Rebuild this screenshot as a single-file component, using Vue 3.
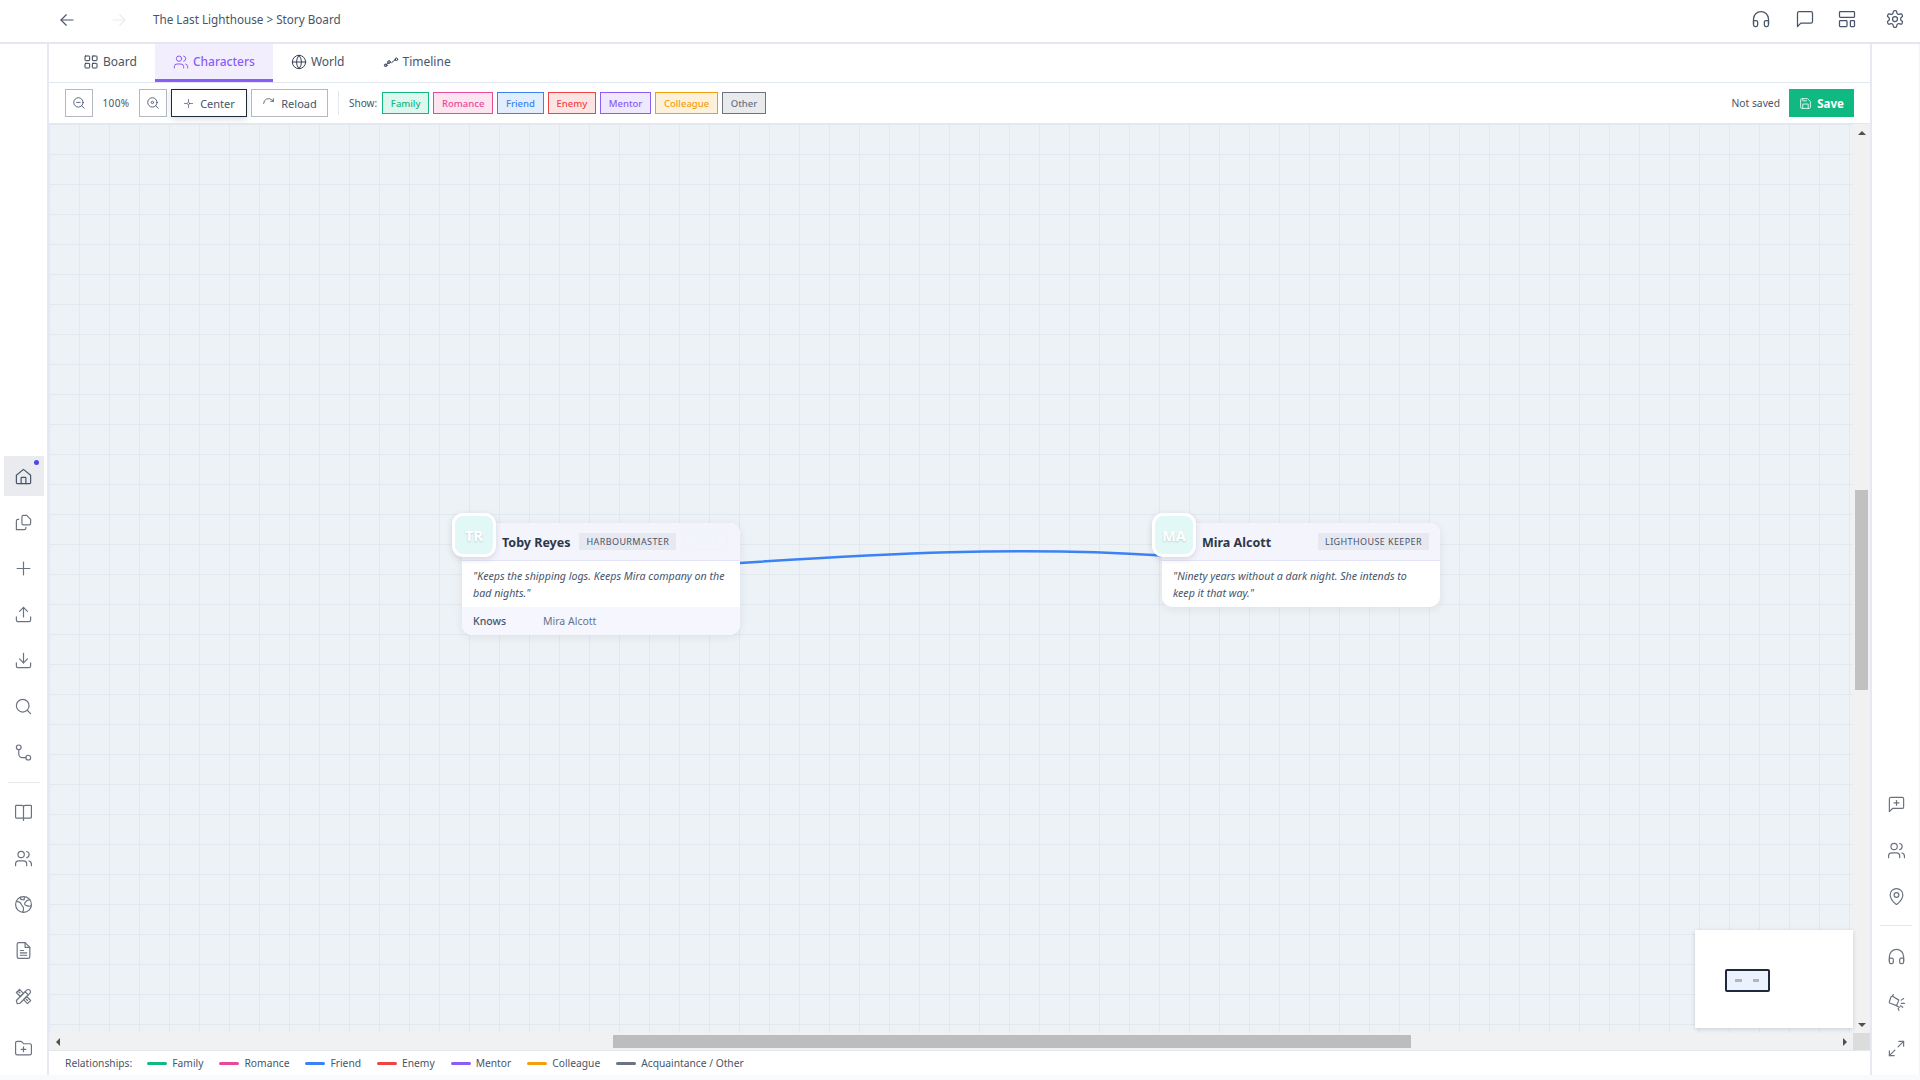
<script setup>
import { onMounted, ref } from 'vue'

const icons = {
  back: ['M20 12H4', 'M11 5l-7 7 7 7'],
  forward: ['M4 12h16', 'M13 5l7 7-7 7'],
  headphones: ['M3 18v-6a9 9 0 0 1 18 0v6', 'M21 19a2 2 0 0 1-2 2h-1a2 2 0 0 1-2-2v-3a2 2 0 0 1 2-2h3z', 'M3 19a2 2 0 0 0 2 2h1a2 2 0 0 0 2-2v-3a2 2 0 0 0-2-2H3z'],
  message: ['M21 15a2 2 0 0 1-2 2H7l-4 4V5a2 2 0 0 1 2-2h14a2 2 0 0 1 2 2z'],
  layout: ['M4 3h16a1 1 0 0 1 1 1v5a1 1 0 0 1-1 1H4a1 1 0 0 1-1-1V4a1 1 0 0 1 1-1z', 'M4 14h7a1 1 0 0 1 1 1v5a1 1 0 0 1-1 1H4a1 1 0 0 1-1-1v-5a1 1 0 0 1 1-1z', 'M17 14h3a1 1 0 0 1 1 1v5a1 1 0 0 1-1 1h-3a1 1 0 0 1-1-1v-5a1 1 0 0 1 1-1z'],
  gear: ['M12.2 2h-.4a2 2 0 0 0-2 2v.2a2 2 0 0 1-1 1.7l-.4.3a2 2 0 0 1-2 0l-.2-.1a2 2 0 0 0-2.7.7l-.2.4a2 2 0 0 0 .7 2.7l.2.1a2 2 0 0 1 1 1.7v.5a2 2 0 0 1-1 1.8l-.2.1a2 2 0 0 0-.7 2.7l.2.4a2 2 0 0 0 2.7.7l.2-.1a2 2 0 0 1 2 0l.4.3a2 2 0 0 1 1 1.7v.2a2 2 0 0 0 2 2h.4a2 2 0 0 0 2-2v-.2a2 2 0 0 1 1-1.7l.4-.3a2 2 0 0 1 2 0l.2.1a2 2 0 0 0 2.7-.7l.2-.4a2 2 0 0 0-.7-2.7l-.2-.1a2 2 0 0 1-1-1.8v-.5a2 2 0 0 1 1-1.7l.2-.1a2 2 0 0 0 .7-2.7l-.2-.4a2 2 0 0 0-2.7-.7l-.2.1a2 2 0 0 1-2 0l-.4-.3a2 2 0 0 1-1-1.7V4a2 2 0 0 0-2-2z', 'M15 12a3 3 0 1 1-6 0 3 3 0 0 1 6 0z'],
  home: ['M3 10.5 12 3l9 7.5V20a1 1 0 0 1-1 1H4a1 1 0 0 1-1-1z', 'M9 21v-7a1 1 0 0 1 1-1h4a1 1 0 0 1 1 1v7'],
  copy: ['M10 13V5a2 2 0 0 1 2-2h4l5 5v5a2 2 0 0 1-2 2h-7a2 2 0 0 1-2-2z', 'M6 8H5a2 2 0 0 0-2 2v11h10a2 2 0 0 0 2-2v-1'],
  plus: ['M12 4v16', 'M4 12h16'],
  upload: ['M12 15V3', 'M7 8l5-5 5 5', 'M3 15v4a2 2 0 0 0 2 2h14a2 2 0 0 0 2-2v-4'],
  download: ['M12 3v12', 'M7 10l5 5 5-5', 'M3 15v4a2 2 0 0 0 2 2h14a2 2 0 0 0 2-2v-4'],
  search: ['M19 11a8 8 0 1 1-16 0 8 8 0 0 1 16 0z', 'M21 21l-4.3-4.3'],
  route: ['M9 5.5a3 3 0 1 1-6 0 3 3 0 0 1 6 0z', 'M21 18.5a3 3 0 1 1-6 0 3 3 0 0 1 6 0z', 'M6 8.5V14a4.500 4.500 0 0 0 4.500 4.500H15'],
  book: ['M12 5a2 2 0 0 0-2-2H3a1 1 0 0 0-1 1v14a1 1 0 0 0 1 1h18a1 1 0 0 0 1-1V4a1 1 0 0 0-1-1h-7a2 2 0 0 0-2 2z', 'M12 5v17'],
  users: ['M16 21v-2a4 4 0 0 0-4-4H6a4 4 0 0 0-4 4v2', 'M13 7a4 4 0 1 1-8 0 4 4 0 0 1 8 0z', 'M22 21v-2a4 4 0 0 0-3-3.900', 'M16 3.100a4 4 0 0 1 0 7.800'],
  planet: ['M22 12a10 10 0 1 1-20 0 10 10 0 0 1 20 0z', 'M3 8.500c3-.5 5 .5 6 3s3 3 3 5 0 4-1 5', 'M20 5.500c-3 1-5 2-6 4s-1 3 2 4 5 1 6 0', 'M8 3c0 2 1 3 3 3s2 1 2-3'],
  file: ['M14 2H6a2 2 0 0 0-2 2v16a2 2 0 0 0 2 2h12a2 2 0 0 0 2-2V8z', 'M14 2v6h6', 'M8 12h4', 'M8 15h8', 'M8 18h8'],
  tools: ['M4 21l-1-4L16 4a2.800 2.800 0 0 1 4 4L7.500 20.500z', 'M14 6l4 4', 'M3 7l4-4 5 5-4 4z', 'M12 16l4-4 5 5-4 4z', 'M6 6l1.500 1.500', 'M15.500 15.500L17 17'],
  folderPlus: ['M20 20a2 2 0 0 0 2-2V8a2 2 0 0 0-2-2h-8l-2-2.500a2 2 0 0 0-1.700-.5H4a2 2 0 0 0-2 2v13a2 2 0 0 0 2 2z', 'M12 10v6', 'M9 13h6'],
  msgPlus: ['M21 15a2 2 0 0 1-2 2H7l-4 4V5a2 2 0 0 1 2-2h14a2 2 0 0 1 2 2z', 'M12 7v6', 'M9 10h6'],
  pin: ['M20 10c0 5-5.500 10.200-7.400 11.800a1 1 0 0 1-1.200 0C9.500 20.200 4 15 4 10a8 8 0 0 1 16 0z', 'M15 10a3 3 0 1 1-6 0 3 3 0 0 1 6 0z'],
  spot: ['M7 4l8 5-3 7-8-3a1.500 1.500 0 0 1-1-2l2-6a1.500 1.500 0 0 1 2-1z', 'M7 4l1-2', 'M18 13h4', 'M17 16l3 2', 'M18 9l3-2', 'M14 19l1 3', 'M12 16l4 2'],
  expand: ['M15 3h6v6', 'M21 3l-7 7', 'M9 21H3v-6', 'M3 21l7-7'],
  grid: ['M4 3h5a1 1 0 0 1 1 1v5a1 1 0 0 1-1 1H4a1 1 0 0 1-1-1V4a1 1 0 0 1 1-1z', 'M15 3h5a1 1 0 0 1 1 1v5a1 1 0 0 1-1 1h-5a1 1 0 0 1-1-1V4a1 1 0 0 1 1-1z', 'M4 14h5a1 1 0 0 1 1 1v5a1 1 0 0 1-1 1H4a1 1 0 0 1-1-1v-5a1 1 0 0 1 1-1z', 'M15 14h5a1 1 0 0 1 1 1v5a1 1 0 0 1-1 1h-5a1 1 0 0 1-1-1v-5a1 1 0 0 1 1-1z'],
  globe: ['M22 12a10 10 0 1 1-20 0 10 10 0 0 1 20 0z', 'M2 12h20', 'M12 2a15 15 0 0 1 0 20 15 15 0 0 1 0-20z'],
  timeline: ['M3 17l6-4', 'M13 13l6-5', 'M6 17a2 2 0 1 1-4 0 2 2 0 0 1 4 0z', 'M11 12a2 2 0 1 1-4 0 2 2 0 0 1 4 0z', 'M22 8a2 2 0 1 1-4 0 2 2 0 0 1 4 0z'],
  zoomOut: ['M19 11a8 8 0 1 1-16 0 8 8 0 0 1 16 0z', 'M21 21l-4.300-4.300', 'M8 11h6'],
  zoomIn: ['M19 11a8 8 0 1 1-16 0 8 8 0 0 1 16 0z', 'M21 21l-4.300-4.300', 'M13 11a2 2 0 1 1-4 0 2 2 0 0 1 4 0z'],
  center: ['M14.500 12a2.500 2.500 0 1 1-5 0 2.500 2.500 0 0 1 5 0z', 'M12 3v5', 'M12 16v5', 'M3 12h5', 'M16 12h5'],
  reload: ['M3 12a9 9 0 0 1 15-6.700L21 8', 'M21 3v5h-5'],
  save: ['M15 3H5a2 2 0 0 0-2 2v14a2 2 0 0 0 2 2h14a2 2 0 0 0 2-2V9z', 'M17 21v-8H7v8', 'M7 3v4h7'],
  link: ['M9 17H7a5 5 0 0 1 0-10h2', 'M15 7h2a5 5 0 0 1 0 10h-2', 'M8 12h8'],
}

const leftTop = ['home', 'copy', 'plus', 'upload', 'download', 'search', 'route']
const leftMid = ['book', 'users', 'planet', 'file', 'tools']
const rightTop = ['msgPlus', 'users', 'pin']
const rightBottom = ['headphones', 'spot', 'expand']
const topIcons = [
  { name: 'headphones', cls: 't1' },
  { name: 'message', cls: 't2' },
  { name: 'layout', cls: 't3' },
  { name: 'gear', cls: 't4' },
]

const tabs = [
  { label: 'Board', icon: 'grid' },
  { label: 'Characters', icon: 'users', active: true },
  { label: 'World', icon: 'globe' },
  { label: 'Timeline', icon: 'timeline' },
]

const chips = [
  { label: 'Family', color: '#10b981', bg: '#dff6ee' },
  { label: 'Romance', color: '#ec4899', bg: '#fde4f1' },
  { label: 'Friend', color: '#3b82f6', bg: '#e2edfe' },
  { label: 'Enemy', color: '#ef4444', bg: '#fde4e4' },
  { label: 'Mentor', color: '#8b5cf6', bg: '#efe8fe' },
  { label: 'Colleague', color: '#f59e0b', bg: '#fef1dc' },
  { label: 'Other', color: '#6b7280', bg: '#e9eaec' },
]

const legend = [
  { label: 'Family', color: '#10b981' },
  { label: 'Romance', color: '#ec4899' },
  { label: 'Friend', color: '#3b82f6' },
  { label: 'Enemy', color: '#ef4444' },
  { label: 'Mentor', color: '#8b5cf6' },
  { label: 'Colleague', color: '#f59e0b' },
  { label: 'Acquaintance / Other', color: '#6b7280' },
]

const scroller = ref(null)
onMounted(() => {
  scroller.value.scrollLeft = 1230
  scroller.value.scrollTop = 1590
})
</script>

<template>
  <div class="app">
    <header class="topbar">
      <svg class="ico nav-back" viewBox="0 0 24 24"><path v-for="d in icons.back" :key="d" :d="d" /></svg>
      <svg class="ico nav-fwd" viewBox="0 0 24 24"><path v-for="d in icons.forward" :key="d" :d="d" /></svg>
      <div class="crumb">The Last Lighthouse &gt; Story Board</div>
      <div class="top-actions">
        <svg v-for="t in topIcons" :key="t.name" class="ico top-ico" :class="t.cls" viewBox="0 0 24 24"><path v-for="d in icons[t.name]" :key="d" :d="d" /></svg>
      </div>
    </header>

    <div class="body">
      <aside class="left">
        <div v-for="(n, i) in leftTop" :key="n" class="side-btn" :class="{ on: i === 0 }">
          <svg class="ico side-ico" viewBox="0 0 24 24"><path v-for="d in icons[n]" :key="d" :d="d" /></svg>
          <span v-if="i === 0" class="dot"></span>
        </div>
        <div class="side-div"></div>
        <div v-for="n in leftMid" :key="n" class="side-btn">
          <svg class="ico side-ico" viewBox="0 0 24 24"><path v-for="d in icons[n]" :key="d" :d="d" /></svg>
        </div>
        <div class="side-btn folder">
          <svg class="ico side-ico" viewBox="0 0 24 24"><path v-for="d in icons.folderPlus" :key="d" :d="d" /></svg>
        </div>
      </aside>

      <main class="main">
        <nav class="tabs">
          <div v-for="t in tabs" :key="t.label" class="tab" :class="{ active: t.active }">
            <svg class="ico tab-ico" viewBox="0 0 24 24"><path v-for="d in icons[t.icon]" :key="d" :d="d" /></svg>
            <span>{{ t.label }}</span>
          </div>
        </nav>

        <div class="toolbar">
          <button class="tb-btn square"><svg class="ico tb-ico" viewBox="0 0 24 24"><path v-for="d in icons.zoomOut" :key="d" :d="d" /></svg></button>
          <span class="pct">100%</span>
          <button class="tb-btn square"><svg class="ico tb-ico" viewBox="0 0 24 24"><path v-for="d in icons.zoomIn" :key="d" :d="d" /></svg></button>
          <button class="tb-btn wide dark"><svg class="ico tb-ico" viewBox="0 0 24 24"><path v-for="d in icons.center" :key="d" :d="d" /></svg>Center</button>
          <button class="tb-btn wide"><svg class="ico tb-ico" viewBox="0 0 24 24"><path v-for="d in icons.reload" :key="d" :d="d" /></svg>Reload</button>
          <span class="tb-div"></span>
          <span class="show">Show:</span>
          <span v-for="c in chips" :key="c.label" class="chip" :style="{ color: c.color, background: c.bg, borderColor: c.color }">{{ c.label }}</span>
          <span class="not-saved">Not saved</span>
          <button class="save"><svg class="ico save-ico" viewBox="0 0 24 24"><path v-for="d in icons.save" :key="d" :d="d" /></svg>Save</button>
        </div>

        <div class="stage">
          <div ref="scroller" class="scroller">
            <div class="canvas">
              <svg class="edge" viewBox="0 0 500 100">
                <path d="M40 63 C 179 54 318 46 462 55.500" />
              </svg>

              <div class="node toby">
                <div class="avatar">TR</div>
                <div class="n-head">
                  <span class="n-name">Toby Reyes</span>
                  <span class="n-role">HARBOURMASTER</span>
                  <span class="n-link"><svg class="ico link-ico" viewBox="0 0 24 24"><path v-for="d in icons.link" :key="d" :d="d" /></svg>1</span>
                </div>
                <p class="n-text">"Keeps the shipping logs. Keeps Mira company on the bad nights."</p>
                <div class="n-rel"><span class="rel-k">Knows</span><span class="rel-v">Mira Alcott</span></div>
              </div>

              <div class="node mira">
                <div class="avatar">MA</div>
                <div class="n-head">
                  <span class="n-name">Mira Alcott</span>
                  <span class="n-role">LIGHTHOUSE KEEPER</span>
                </div>
                <p class="n-text">"Ninety years without a dark night. She intends to keep it that way."</p>
              </div>
            </div>
          </div>
          <div class="vbar">
            <span class="sb-btn"><i class="tri up"></i></span>
            <span class="v-gap"></span>
            <span class="v-thumb"></span>
            <span class="sb-fill"></span>
            <span class="sb-btn"><i class="tri down"></i></span>
          </div>
          <div class="hbar">
            <span class="sb-btn"><i class="tri left-a"></i></span>
            <span class="h-gap"></span>
            <span class="h-thumb"></span>
            <span class="sb-fill"></span>
            <span class="sb-btn"><i class="tri right-a"></i></span>
          </div>
          <div class="corner"></div>
          <div class="minimap">
            <div class="mini-view">
              <i class="m1"></i><i class="m2"></i>
            </div>
          </div>
        </div>

        <footer class="legend">
          <span class="lg-title">Relationships:</span>
          <span v-for="l in legend" :key="l.label" class="lg-item">
            <i class="lg-line" :style="{ background: l.color }"></i>{{ l.label }}
          </span>
        </footer>
      </main>

      <aside class="right">
        <div v-for="n in rightTop" :key="n" class="side-btn">
          <svg class="ico side-ico" viewBox="0 0 24 24"><path v-for="d in icons[n]" :key="d" :d="d" /></svg>
        </div>
        <div class="side-div r"></div>
        <div v-for="n in rightBottom" :key="n" class="side-btn">
          <svg class="ico side-ico" viewBox="0 0 24 24"><path v-for="d in icons[n]" :key="d" :d="d" /></svg>
        </div>
      </aside>
    </div>
    <div class="bottom-band"></div>
  </div>
</template>

<style scoped>
.app {
  width: 1920px;
  height: 1080px;
  display: flex;
  flex-direction: column;
  font-family: "Noto Sans", sans-serif;
  color: #334155;
  background: #fff;
  overflow: hidden;
}
.ico {
  fill: none;
  stroke: currentColor;
  stroke-width: 1.5;
  stroke-linecap: round;
  stroke-linejoin: round;
  flex: none;
}
.topbar {
  height: 42px;
  box-sizing: content-box;
  flex: none;
  border-bottom: 2px solid #e4e7f1;
  display: flex;
  align-items: center;
  padding-left: 58px;
}
.nav-back { width: 18px; height: 18px; color: #475569; margin-bottom: 3px; }
.nav-fwd { width: 18px; height: 18px; color: #e8ebf0; margin-left: 34px; margin-bottom: 3px; }
.crumb { margin-left: 25px; font-size: 11.700px; color: #475569; margin-bottom: 4px; }
.top-actions { margin-left: auto; display: flex; align-items: center; padding-right: 15px; margin-bottom: 4px; }
.top-ico { width: 20px; height: 20px; color: #475569; }
.t2 { margin-left: 24px; }
.t3 { margin-left: 22px; }
.t4 { margin-left: 28px; }

.body { flex: 1; min-height: 0; display: flex; }
.left {
  width: 47px;
  flex: none;
  display: flex;
  flex-direction: column;
  align-items: center;
  padding-top: 412px;
  gap: 6px;
  border-right: 2px solid #e6e9f3;
}
.side-btn {
  width: 40px;
  height: 40px;
  display: flex;
  align-items: center;
  justify-content: center;
  position: relative;
  color: #6b7280;
  flex: none;
}
.side-btn.on { background: #eaebee; color: #475569; }
.side-ico { width: 19px; height: 19px; }
.dot {
  position: absolute;
  right: 5px;
  top: 4px;
  width: 5px;
  height: 5px;
  border-radius: 50%;
  background: #4f46e5;
}
.side-div { width: 32px; height: 1px; background: #e5e7eb; margin: 4px 0 3px; flex: none; }
.side-div.r { margin: 3px 0 4px; }
.folder { margin-top: 6px; }

.main { flex: 1; min-width: 0; display: flex; flex-direction: column; }
.tabs {
  height: 38px;
  flex: none;
  border-bottom: 1px solid #e2e8f0;
  display: flex;
  padding-left: 16px;
}
.tab {
  display: flex;
  align-items: center;
  gap: 4px;
  padding: 0 18px;
  font-size: 12px;
  color: #475569;
  border-bottom: 3px solid transparent;
}
.tab:nth-child(4) { padding-left: 20px; }
.tab.active { background: #f3eefe; color: #8b5cf6; border-bottom-color: #8b5cf6; font-weight: 500; }
.tab-ico { width: 16px; height: 16px; color: #334155; }
.tab.active .tab-ico { color: #8b5cf6; }

.toolbar {
  height: 41px;
  flex: none;
  box-sizing: border-box;
  border-bottom: 1px solid #e2e8f0;
  display: flex;
  align-items: center;
  padding-left: 16px;
  padding-right: 16px;
}
button { font-family: inherit; }
.tb-btn {
  height: 28px;
  background: #fff;
  border: 1px solid #b4b9c1;
  color: #475569;
  display: flex;
  align-items: center;
  justify-content: center;
  padding: 0;
  font-size: 11px;
  gap: 6px;
  box-sizing: border-box;
}
.square { width: 28px; }
.pct { width: 46px; text-align: center; font-size: 10px; letter-spacing: 0.4px; color: #475569; }
.wide { margin-left: 4px; width: 77px; }
.dark { width: 76px; border: 1px solid #1e293b; box-shadow: 0 2px 6px rgba(15, 23, 42, 0.15); }
.tb-ico { width: 13px; height: 13px; }
.dark .tb-ico { width: 11px; height: 11px; }
.square .tb-ico { width: 14px; height: 14px; }
.tb-div { width: 1px; height: 24px; background: #e2e8f0; margin-left: 10px; }
.show { font-size: 10px; color: #475569; margin-left: 10px; margin-right: 5px; }
.chip {
  height: 22px;
  box-sizing: border-box;
  border: 1px solid;
  display: inline-flex;
  align-items: center;
  padding: 0 7.800px;
  font-size: 9.500px;
  font-weight: 500;
  margin-right: 4px;
}
.not-saved { margin-left: auto; font-size: 10.300px; color: #475569; }
.save {
  margin-left: 9px;
  width: 65px;
  height: 28px;
  border: none;
  background: #10b981;
  color: #fff;
  font-size: 11.500px;
  font-weight: 700;
  display: flex;
  align-items: center;
  justify-content: center;
  gap: 5px;
  padding: 0;
}
.save-ico { width: 13px; height: 13px; }

.stage {
  flex: 1;
  min-height: 0;
  position: relative;
  display: grid;
  grid-template-columns: 1fr 17px;
  grid-template-rows: 1fr 17px;
}
.scroller {
  overflow: hidden;
  min-width: 0;
  min-height: 0;
}
.vbar, .hbar { display: flex; background: #f1f1f1; }
.vbar { flex-direction: column; }
.sb-btn { width: 17px; height: 17px; flex: none; display: flex; align-items: center; justify-content: center; }
.sb-fill { flex: 1; }
.v-gap { height: 349px; flex: none; }
.v-thumb { height: 200px; flex: none; margin: 0 2px; background: #c1c1c1; }
.h-gap { width: 547px; flex: none; }
.h-thumb { width: 798px; flex: none; margin: 2px 0; background: #bdbdbd; }
.corner { background: #dcdcdc; }
.tri { width: 0; height: 0; display: block; border-style: solid; border-color: transparent; }
.up { border-width: 0 4px 4px; border-bottom-color: #505050; }
.down { border-width: 4px 4px 0; border-top-color: #505050; }
.left-a { border-width: 4px 4px 4px 0; border-right-color: #505050; }
.right-a { border-width: 4px 0 4px 4px; border-left-color: #505050; }
.canvas {
  width: 4000px;
  height: 4000px;
  position: relative;
  background-color: #edf2f6;
  background-image:
    linear-gradient(to right, #e2e8ee 1px, transparent 1px),
    linear-gradient(to bottom, #e2e8ee 1px, transparent 1px);
  background-size: 30px 30px;
}
.edge {
  position: absolute;
  left: 1881px;
  top: 1966px;
  width: 500px;
  height: 100px;
  fill: none;
  stroke: #3b82f6;
  stroke-width: 2.500;
}
.node {
  position: absolute;
  width: 278px;
  background: #fff;
  border-radius: 10px;
  box-shadow: 0 2px 10px rgba(30, 41, 59, 0.08);
}
.toby { left: 1643px; top: 1989px; }
.mira { left: 2343px; top: 1989px; }
.avatar {
  position: absolute;
  left: -10px;
  top: -10px;
  width: 44px;
  height: 44px;
  box-sizing: border-box;
  border: 3px solid #fff;
  border-radius: 11px;
  background: #e2f8f6;
  color: #fff;
  font-weight: 700;
  font-size: 14.500px;
  display: flex;
  align-items: center;
  justify-content: center;
  text-shadow: 0 1px 2px rgba(0, 0, 0, 0.16);
  box-shadow: 0 2px 6px rgba(30, 41, 59, 0.15);
}
.n-head {
  height: 38px;
  box-sizing: border-box;
  background: #f4f4fd;
  border-bottom: 1px solid #e2e2f8;
  border-radius: 10px 10px 0 0;
  display: flex;
  align-items: center;
  padding: 0 11px 0 40px;
}
.n-name { font-size: 12.500px; font-weight: 700; color: #2d3748; white-space: nowrap; margin-top: 2px; }
.n-role {
  margin-left: 9px;
  height: 17px;
  padding: 0 7px;
  background: #e8e8f1;
  font-size: 9px;
  letter-spacing: 0.4px;
  color: #475569;
  display: flex;
  align-items: center;
  white-space: nowrap;
}
.mira .n-role { margin-left: auto; }
.n-link {
  margin-left: 7px;
  width: 45px;
  height: 17px;
  box-sizing: border-box;
  border: 1px solid #f0f2fc;
  font-size: 10px;
  color: #e4f9f4;
  display: flex;
  align-items: center;
  justify-content: center;
  gap: 2px;
}
.link-ico { width: 18px; height: 14px; color: #e4f9f4; }
.n-text {
  margin: 0;
  padding: 7px 11px 5px;
  font-size: 10.650px;
  line-height: 17px;
  font-style: italic;
  color: #475569;
}
.n-rel {
  height: 28px;
  background: #f6f6fe;
  border-radius: 0 0 10px 10px;
  display: flex;
  align-items: center;
  padding-left: 11px;
  font-size: 10.500px;
}
.rel-k { width: 70px; font-weight: 500; color: #475569; }
.rel-v { color: #64748b; }

.minimap {
  position: absolute;
  right: 17px;
  bottom: 22px;
  width: 158px;
  height: 98px;
  background: #fff;
  box-shadow: 0 1px 4px rgba(30, 41, 59, 0.18);
}
.mini-view {
  position: absolute;
  left: 30px;
  top: 39px;
  width: 45px;
  height: 23px;
  box-sizing: border-box;
  border: 2px solid #1e293b;
  border-radius: 2px;
  background: #ebf2fe;
}
.mini-view i {
  position: absolute;
  top: 8px;
  height: 3px;
  background: #b0b5c2;
}
.m1 { left: 8px; width: 7px; }
.m2 { left: 26px; width: 6px; }

.legend {
  height: 25px;
  flex: none;
  box-sizing: border-box;
  border-top: 1px solid #e2e8f0;
  display: flex;
  align-items: center;
  padding-left: 16px;
  font-size: 10.250px;
  color: #475569;
  gap: 16px;
}
.lg-title { margin-right: -1px; }
.lg-item { display: flex; align-items: center; gap: 5px; }
.lg-line { width: 20px; height: 3px; border-radius: 2px; }

.right {
  width: 48px;
  flex: none;
  display: flex;
  flex-direction: column;
  align-items: center;
  padding-top: 740px;
  gap: 6px;
  border-left: 2px solid #e6e9f3;
  box-shadow: inset -1px 0 1px #f1f3f7;
}
.bottom-band { height: 5px; flex: none; background: #f8fafc; }
</style>

<style>
html, body { margin: 0; overflow: hidden; background: #fff; }
</style>
